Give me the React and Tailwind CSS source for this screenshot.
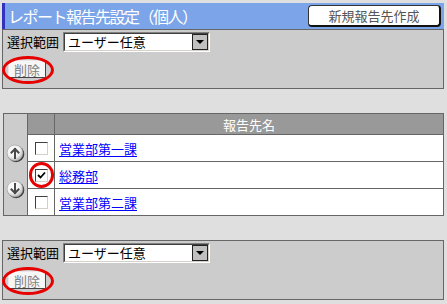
const FONT = "font-['Noto_Sans_CJK_JP','Noto_Sans',sans-serif]";

function SelectBox() {
  return (
    <div className="w-[147px] h-[20px] border-t border-l border-[#808080] border-r-white border-b-white border-r border-b">
      <div className="h-full flex border-t border-l border-[#404040] border-r border-b border-r-[#d4d0c8] border-b-[#d4d0c8] bg-white">
        <div className="flex-1 text-[13px] leading-[16px] text-black pl-[3px]">ユーザー任意</div>
        <div className="w-[16px] h-full bg-[#c0c0c0] border border-[#222] flex items-center justify-center">
          <svg width="8" height="5" viewBox="0 0 8 5">
            <polygon points="0,0 8,0 4,4" fill="#000" />
          </svg>
        </div>
      </div>
    </div>
  );
}

function DeleteButton() {
  return (
    <div className="relative w-fit ml-[1px]">
      <div className="w-[38px] h-[18px] bg-[#f6f6f6] border border-t-[#e8e8e8] border-l-[#e8e8e8] border-r-[#444] border-b-[#444] rounded-[2px] flex items-center justify-center text-[13px] leading-none text-[#808080]">
        削除
      </div>
      <div className="absolute left-[-6px] right-[-8px] top-[-4px] bottom-[-6px] border-[3px] border-[#e60000] rounded-[50%]" />
    </div>
  );
}

function Panel() {
  return (
    <div className="h-[60px] border border-[#666] bg-[#cccccc] pl-[4px] pt-[2px]">
      <div className="flex items-center gap-[4px]">
        <span className="text-[13px] leading-[16px] text-black">選択範囲</span>
        <SelectBox />
      </div>
      <div className="mt-[8px]">
        <DeleteButton />
      </div>
    </div>
  );
}

function Arrow({ up }) {
  return (
    <svg width="19" height="19" viewBox="0 0 19 19">
      <defs>
        <radialGradient id={up ? "gu" : "gd"} cx="0.4" cy="0.35" r="0.7">
          <stop offset="0" stopColor="#ffffff" />
          <stop offset="0.6" stopColor="#f0f0f0" />
          <stop offset="1" stopColor="#a8a8a8" />
        </radialGradient>
      </defs>
      <circle cx="10" cy="10" r="8.3" fill="#3a3a3a" />
      <circle cx="9" cy="9" r="8" fill={`url(#${up ? "gu" : "gd"})`} stroke="#9a9a9a" strokeWidth="0.6" />
      {up ? (
        <g stroke="#4a4a4a" strokeWidth="2" fill="none" strokeLinecap="square">
          <line x1="9" y1="5" x2="9" y2="14" />
          <polyline points="5.5,8.5 9,5 12.5,8.5" />
        </g>
      ) : (
        <g stroke="#4a4a4a" strokeWidth="2" fill="none" strokeLinecap="square">
          <line x1="9" y1="4" x2="9" y2="13" />
          <polyline points="5.5,9.5 9,13 12.5,9.5" />
        </g>
      )}
    </svg>
  );
}

function Checkbox({ checked }) {
  return (
    <div className="w-[13px] h-[13px] border border-t-[#404040] border-l-[#404040] border-r-[#d4d0c8] border-b-[#d4d0c8] bg-white flex items-center justify-center">
      {checked && (
        <svg width="9" height="9" viewBox="0 0 9 9">
          <polyline points="1,4 3.5,6.5 8,1.5" fill="none" stroke="#000" strokeWidth="1.8" />
        </svg>
      )}
    </div>
  );
}

function Row({ name, checked }) {
  return (
    <div className="h-[27px] flex border-t border-[#666]">
      <div className="w-[27px] border-r border-[#666] flex items-center justify-center bg-white relative">
        <Checkbox checked={checked} />
        {checked && (
          <div className="absolute left-[1px] top-[0px] w-[25px] h-[26px] border-[3px] border-[#e60000] rounded-full" />
        )}
      </div>
      <div className="flex-1 bg-white flex items-center pl-[4px]">
        <a href="#" className="text-[13px] leading-none text-[#0000ff] underline underline-offset-[2px]">
          {name}
        </a>
      </div>
    </div>
  );
}

export default function App() {
  return (
    <div className={`w-[447px] h-[304px] bg-[#dfdfdf] overflow-hidden ${FONT}`}>
      <div className="pt-[3px] pl-[2px] w-[444px]">
        <div className="h-[26px] flex items-center justify-between bg-[#7ca4e8] border-l-[3px] border-[#3232c0] pl-[3px] pr-[3px]">
          <span className="text-white text-[16px] leading-none tracking-[-1.5px]">レポート報告先設定（個人）</span>
          <div className="w-[133px] h-[22px] bg-white border border-[#333] border-r-2 border-b-2 border-r-[#111] border-b-[#111] rounded-[4px] flex items-center justify-center text-[13px] leading-none text-[#555]">
            新規報告先作成
          </div>
        </div>
        <Panel />
        <div className="mt-[24px] ml-[1px] w-[441px] h-[103px] border border-[#666] flex">
          <div className="w-[24px] border-r border-[#666] bg-[#cccccc] flex flex-col items-center pt-[30px] gap-[17px]">
            <Arrow up />
            <Arrow />
          </div>
          <div className="flex-1 flex flex-col">
            <div className="h-[20px] flex bg-[#999999]">
              <div className="w-[27px] border-r border-[#666]" />
              <div className="flex-1 flex items-center justify-center text-white text-[13px] leading-none">報告先名</div>
            </div>
            <Row name="営業部第一課" />
            <Row name="総務部" checked />
            <Row name="営業部第二課" />
          </div>
        </div>
        <div className="mt-[24px]">
          <Panel />
        </div>
      </div>
    </div>
  );
}
